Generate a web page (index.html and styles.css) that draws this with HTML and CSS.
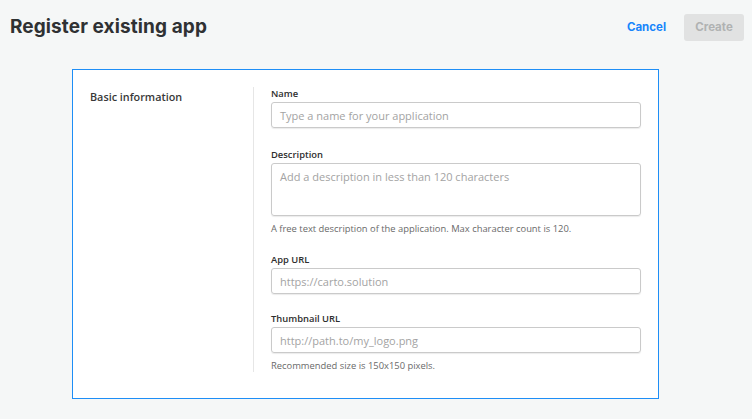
FILE: index.html
```html
<!DOCTYPE html>
<html>
<head>
<meta charset="utf-8">
<link rel="stylesheet" href="styles.css">
</head>
<body>
<header class="topbar">
  <h1 class="title">Register existing app</h1>
  <div class="actions">
    <a class="cancel">Cancel</a>
    <button class="create" disabled>Create</button>
  </div>
</header>
<main class="card">
  <div class="section-title">Basic information</div>
  <div class="divider"></div>
  <form class="form">
    <label class="label">Name</label>
    <div class="input"><span class="ph">Type a name for your application</span></div>

    <label class="label gap">Description</label>
    <div class="input textarea"><span class="ph">Add a description in less than 120 characters</span></div>
    <p class="help">A free text description of the application. Max character count is 120.</p>

    <label class="label gap-s">App URL</label>
    <div class="input"><span class="ph">https://carto.solution</span></div>

    <label class="label gap-t">Thumbnail URL</label>
    <div class="input"><span class="ph">http://path.to/my_logo.png</span></div>
    <p class="help">Recommended size is 150x150 pixels.</p>
  </form>
</main>
</body>
</html>
```

FILE: styles.css
```css
* { box-sizing: border-box; }
html, body { margin: 0; padding: 0; }
body {
  background: #f5f7f7;
  font-family: "Open Sans", "Liberation Sans", sans-serif;
  color: #2c2c2c;
  width: 752px;
  height: 419px;
  overflow: hidden;
}
.topbar {
  height: 54px;
  display: flex;
  align-items: center;
  justify-content: space-between;
  padding: 0 8px 0 10px;
}
.title {
  margin: 0;
  font-family: "Inter", "Liberation Sans", sans-serif;
  font-weight: 700;
  font-size: 19px;
  letter-spacing: 0.1px;
  color: #2f3133;
  line-height: 24px;
}
.actions {
  display: flex;
  align-items: center;
  gap: 18px;
}
.cancel {
  font-family: "Inter", "Liberation Sans", sans-serif;
  font-weight: 700;
  font-size: 11.5px;
  color: #1785fb;
}
.create {
  width: 60px;
  height: 27px;
  border: none;
  border-radius: 3px;
  background: #e1e2e2;
  color: #b0b2b2;
  font-family: "Inter", "Liberation Sans", sans-serif;
  font-weight: 700;
  font-size: 11.5px;
  padding: 0;
}
.card {
  margin: 15px 0 0 72px;
  width: 587px;
  height: 330px;
  background: #fff;
  border: 1px solid #1e8ef6;
  display: flex;
  padding: 17px 16px 0 17px;
}
.section-title {
  width: 163px;
  font-size: 10.8px;
  font-weight: 600;
  color: #383838;
  line-height: 14px;
  padding-top: 3px;
}
.divider {
  width: 1px;
  height: 285px;
  background: #e6e6e6;
}
.form {
  flex: 1;
  padding-left: 17px;
  display: flex;
  flex-direction: column;
}
.label {
  display: block;
  font-size: 9.4px;
  font-weight: 600;
  color: #2e2e2e;
  line-height: 13px;
  margin-bottom: 2px;
}
.label.gap { margin-top: 20px; }
.label.gap-s { margin-top: 18px; }
.label.gap-t { margin-top: 18px; }
.input {
  width: 370px;
  height: 26px;
  border: 1px solid #cacaca;
  border-radius: 3px;
  box-shadow: 0 1px 1px rgba(0,0,0,0.08);
  padding: 0 8px;
  display: flex;
  align-items: center;
}
.input.textarea {
  height: 53px;
  align-items: flex-start;
  padding-top: 5px;
}
.ph {
  font-size: 11px;
  color: #a3a3a3;
}
.help {
  margin: 6px 0 0;
  font-size: 9.4px;
  line-height: 13px;
  color: #6a6a6a;
}
```
